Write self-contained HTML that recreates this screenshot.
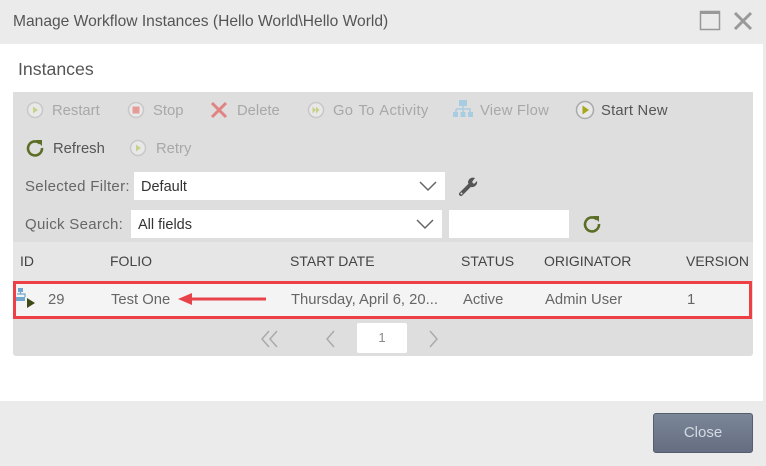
<!DOCTYPE html>
<html><head><style>
*{margin:0;padding:0;box-sizing:border-box}
body{width:766px;height:466px;background:#fff;font-family:"Liberation Sans",sans-serif;position:relative;overflow:hidden;color:#555}
.a{position:absolute;white-space:nowrap}
.dis{color:#a8a8a8;font-size:14.8px}
.en{color:#555;font-size:14.8px}
.lbl{color:#666;font-size:15px}
.sel{position:absolute;background:#fff;height:28px;font-size:14.5px;color:#333;padding:7px 0 0 7px}
.th{font-size:14px;color:#444}
.td{font-size:14.8px;color:#666}
</style></head><body>
<div class="a" style="left:0;top:0;width:766px;height:44px;background:#ebebeb"></div>
<div class="a" style="left:13px;top:13px;font-size:15.6px;color:#555">Manage Workflow Instances (Hello World\Hello World)</div>
<svg class="a" style="left:699px;top:10px" width="24" height="22"><rect x="1.5" y="1.5" width="19" height="18" fill="none" stroke="#999" stroke-width="1.5"/><rect x="1" y="1" width="20" height="3" fill="#999"/></svg>
<svg class="a" style="left:733px;top:11px" width="20" height="20"><path d="M2 2L18 18M18 2L2 18" stroke="#999" stroke-width="3"/></svg>
<div class="a" style="left:763px;top:44px;width:3px;height:357px;background:#ebebeb"></div>
<div class="a" style="left:18px;top:59px;font-size:17.7px;color:#555">Instances</div>
<div class="a" style="left:13px;top:92px;width:740px;height:264px;background:#dedede;border-radius:0 0 3px 3px"></div>
<!-- toolbar -->
<svg class="a" style="left:26px;top:101px" width="18" height="18"><circle cx="9" cy="9" r="7.5" fill="#e8e8e8" stroke="#c8c8c8" stroke-width="1.5"/><path d="M7 5.5L12 9L7 12.5Z" fill="#c9d08a"/></svg>
<div class="a dis" style="left:52px;top:103px">Restart</div>
<svg class="a" style="left:127px;top:101px" width="18" height="18"><circle cx="9" cy="9" r="7.5" fill="#e8e8e8" stroke="#c8c8c8" stroke-width="1.5"/><rect x="5.5" y="5.5" width="7" height="7" fill="#e59b98"/></svg>
<div class="a dis" style="left:153px;top:103px">Stop</div>
<svg class="a" style="left:209px;top:100px" width="20" height="20"><path d="M3 3L17 17M17 3L3 17" stroke="#e28383" stroke-width="3"/></svg>
<div class="a dis" style="left:237px;top:103px">Delete</div>
<svg class="a" style="left:307px;top:101px" width="18" height="18"><circle cx="9" cy="9" r="7.5" fill="#e8e8e8" stroke="#c8c8c8" stroke-width="1.5"/><path d="M5.5 5.5L9 9L5.5 12.5ZM9 5.5L12.5 9L9 12.5Z" fill="#c9d08a"/></svg>
<div class="a dis" style="left:333px;top:103px;letter-spacing:0.3px;word-spacing:1px">Go To Activity</div>
<svg class="a" style="left:453px;top:99px" width="20" height="20"><rect x="6" y="1" width="8" height="6" fill="#a9cde0"/><path d="M10 7V10M3 10H17V13M3 10V13M10 10V13" stroke="#a9cde0" stroke-width="1.5" fill="none"/><rect x="0" y="13" width="5" height="5" fill="#a9cde0"/><rect x="7.5" y="13" width="5" height="5" fill="#a9cde0"/><rect x="15" y="13" width="5" height="5" fill="#a9cde0"/></svg>
<div class="a dis" style="left:480px;top:103px;letter-spacing:0.2px">View Flow</div>
<svg class="a" style="left:575px;top:100px" width="20" height="20"><circle cx="10" cy="10" r="8.5" fill="#e8e8e8" stroke="#aaa" stroke-width="1.5"/><path d="M7.5 5.5L14 10L7.5 14.5Z" fill="#a6a617"/></svg>
<div class="a en" style="left:601px;top:103px;letter-spacing:0.2px">Start New</div>
<svg class="a" style="left:25px;top:138px" width="20" height="20"><path d="M15 5.5A7 7 0 1 0 17 10" stroke="#5b6e25" stroke-width="2.6" fill="none"/><path d="M11 2L17 2L17 8Z" fill="#5b6e25"/></svg>
<div class="a en" style="left:53px;top:141px">Refresh</div>
<svg class="a" style="left:129px;top:139px" width="18" height="18"><circle cx="9" cy="9" r="7.5" fill="#e8e8e8" stroke="#c8c8c8" stroke-width="1.5"/><path d="M7 5.5L12 9L7 12.5Z" fill="#c9d08a"/></svg>
<div class="a dis" style="left:156px;top:141px">Retry</div>
<!-- filters -->
<div class="a lbl" style="left:25px;top:178px;letter-spacing:0.3px">Selected Filter:</div>
<div class="sel" style="left:134px;top:172px;width:311px">Default</div>
<svg class="a" style="left:418px;top:179px" width="20" height="14"><path d="M2 3L10 11L18 3" stroke="#666" stroke-width="1.5" fill="none"/></svg>
<svg class="a" style="left:457px;top:175px" width="22" height="22"><path d="M4 19L12 11" stroke="#555" stroke-width="4" stroke-linecap="round"/><path d="M11 8A5 5 0 0 1 18 3L15 7L17 9L20 6A5 5 0 0 1 14 12Z" fill="#555"/><circle cx="4.5" cy="18.5" r="1" fill="#dedede"/></svg>
<div class="a lbl" style="left:25px;top:216px;letter-spacing:0.3px">Quick Search:</div>
<div class="sel" style="left:131px;top:210px;width:311px">All fields</div>
<svg class="a" style="left:415px;top:217px" width="20" height="14"><path d="M2 3L10 11L18 3" stroke="#666" stroke-width="1.5" fill="none"/></svg>
<div class="a" style="left:449px;top:210px;width:120px;height:28px;background:#fff"></div>
<svg class="a" style="left:582px;top:214px" width="20" height="20"><path d="M15 5.5A7 7 0 1 0 17 10" stroke="#5b6e25" stroke-width="2.6" fill="none"/><path d="M11 2L17 2L17 8Z" fill="#5b6e25"/></svg>
<!-- table -->
<div class="a" style="left:13px;top:242px;width:740px;height:39px;background:#e6e6e6"></div>
<div class="a th" style="left:20px;top:253px">ID</div>
<div class="a th" style="left:110px;top:253px">FOLIO</div>
<div class="a th" style="left:290px;top:253px">START DATE</div>
<div class="a th" style="left:461px;top:253px">STATUS</div>
<div class="a th" style="left:544px;top:253px">ORIGINATOR</div>
<div class="a th" style="left:686px;top:253px">VERSION</div>
<div class="a" style="left:13px;top:281px;width:739px;height:38px;background:#f4f4f4;border:3px solid #ee3f45"></div>
<svg class="a" style="left:16px;top:287px" width="22" height="22"><rect x="2" y="1" width="5" height="4" fill="#6fa8cc"/><path d="M4.5 5V7M1 7H9V10" stroke="#6fa8cc" stroke-width="1.2" fill="none"/><rect x="0" y="10" width="9" height="4" fill="#6fa8cc"/><path d="M11 11L19 16L11 21Z" fill="#3c4a14"/></svg>
<div class="a td" style="left:48px;top:292px">29</div>
<div class="a td" style="left:111px;top:292px">Test One</div>
<svg class="a" style="left:178px;top:292px" width="92" height="14"><path d="M10 7H88" stroke="#e8434a" stroke-width="3"/><path d="M0 7L14 1V13Z" fill="#e8434a"/></svg>
<div class="a td" style="left:291px;top:292px">Thursday, April 6, 20...</div>
<div class="a td" style="left:463px;top:292px">Active</div>
<div class="a td" style="left:545px;top:292px">Admin User</div>
<div class="a td" style="left:687px;top:292px">1</div>
<!-- pager -->
<svg class="a" style="left:258px;top:328px" width="24" height="22"><path d="M11 3L4 11L11 19M19 3L12 11L19 19" stroke="#aaa" stroke-width="1.5" fill="none"/></svg>
<svg class="a" style="left:322px;top:328px" width="16" height="22"><path d="M12 3L5 11L12 19" stroke="#aaa" stroke-width="1.5" fill="none"/></svg>
<div class="a" style="left:357px;top:323px;width:50px;height:30px;background:#fff;border-radius:2px;font-size:13px;color:#888;text-align:center;padding-top:7px">1</div>
<svg class="a" style="left:426px;top:328px" width="16" height="22"><path d="M4 3L11 11L4 19" stroke="#aaa" stroke-width="1.5" fill="none"/></svg>
<!-- footer -->
<div class="a" style="left:0;top:401px;width:766px;height:65px;background:#ebebeb"></div>
<div class="a" style="left:653px;top:413px;width:100px;height:40px;background:linear-gradient(#7b8698,#646e80);border:1px solid #555e6c;border-radius:3px;color:#d4dae3;font-size:15px;text-align:center;padding-top:10px">Close</div>
</body></html>
